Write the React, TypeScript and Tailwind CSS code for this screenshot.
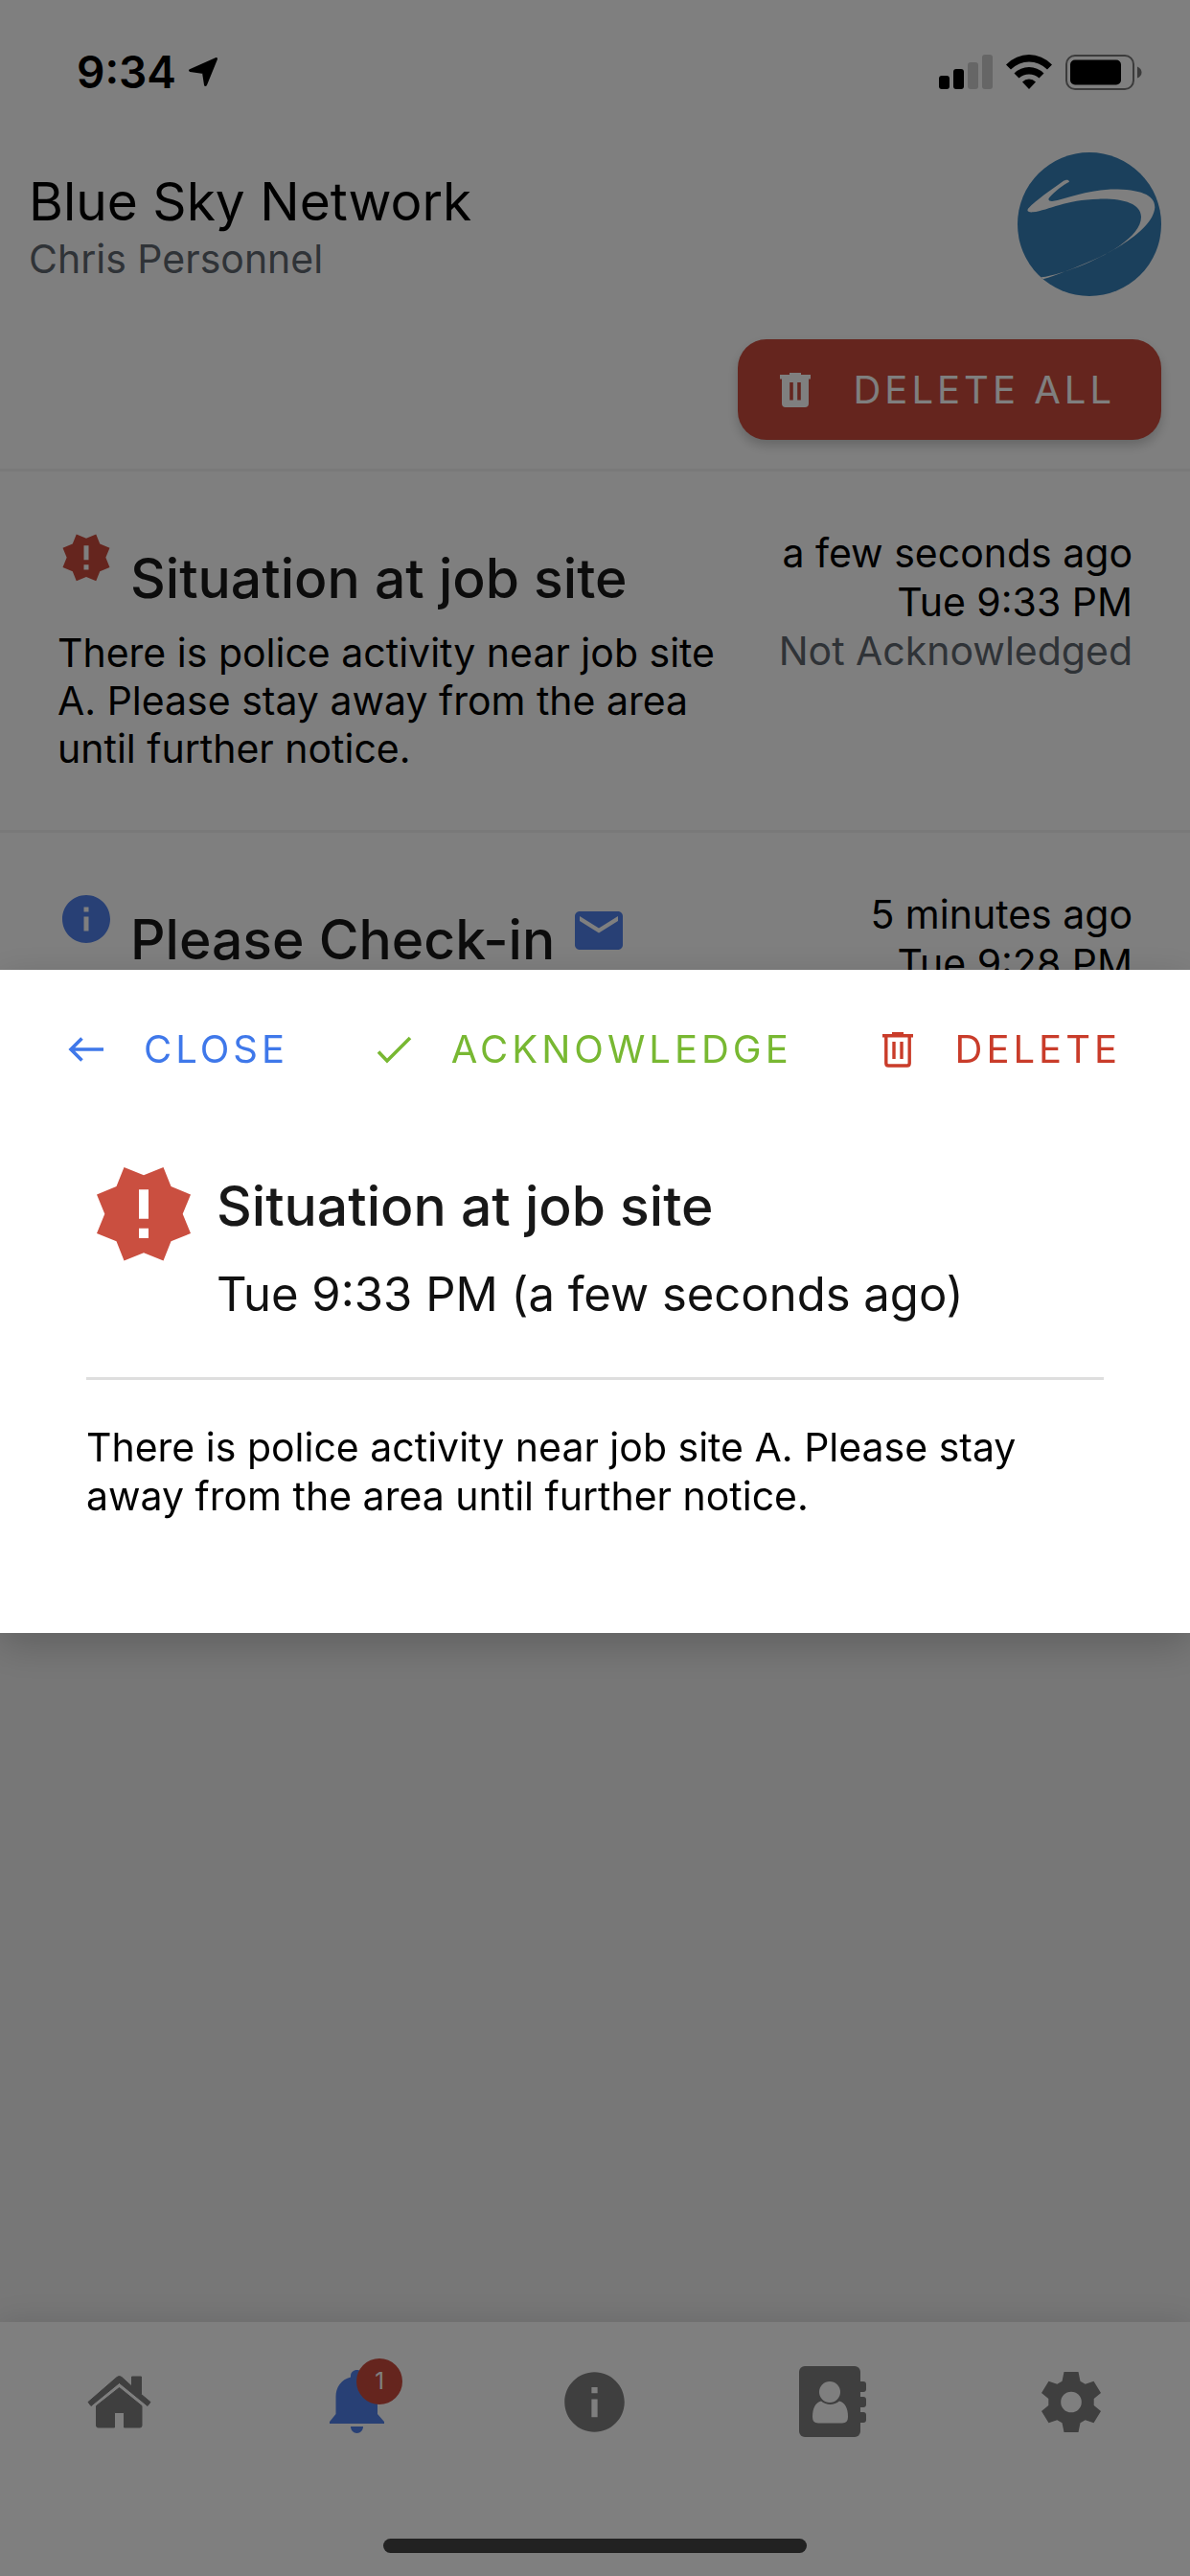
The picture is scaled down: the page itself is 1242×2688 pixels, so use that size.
import { useState } from 'react';
import type { ReactNode } from 'react';
import { MdEmail, MdInfo } from 'react-icons/md';

interface Alert {
  id: number;
  kind: 'emergency' | 'info';
  title: string;
  body?: string;
  ago: string;
  time: string;
  status?: string;
  mail?: boolean;
}

const ALERTS: Alert[] = [
  {
    id: 1,
    kind: 'emergency',
    title: 'Situation at job site',
    body: 'There is police activity near job site A. Please stay away from the area until further notice.',
    ago: 'a few seconds ago',
    time: 'Tue 9:33 PM',
    status: 'Not Acknowledged',
  },
  {
    id: 2,
    kind: 'info',
    title: 'Please Check-in',
    ago: '5 minutes ago',
    time: 'Tue 9:28 PM',
    mail: true,
  },
];

function EmergencyIcon({ className }: { className: string }) {
  return (
    <svg viewBox="-11 -11 120 120" className={className} fill="currentColor" aria-hidden="true">
      <path
        fillRule="evenodd"
        d="M28.5 0 49 8.3 69.5 0 77.5 20 98 28.5 89.7 48.7 98 69 77.5 77.3 69.5 97.5 49 89.2 28.5 97.5 20.5 77.3 0 69 8.3 48.7 0 28.5 20.5 20ZM44 23.3V53.7H54V23.3ZM44 63.7V74H54V63.7Z"
      />
    </svg>
  );
}

function TrashIcon() {
  return (
    <svg viewBox="0 0 48 48" className="size-12" fill="currentColor" aria-hidden="true">
      <path
        fillRule="evenodd"
        d="M18 6H30V8H40V12.5H38V38Q38 42 34 42H14Q10 42 10 38V12.5H8V8H18ZM18.2 16V34.5H21.8V16ZM26.2 16V34.5H29.8V16Z"
      />
    </svg>
  );
}

function TrashOutlineIcon() {
  return (
    <svg viewBox="0 0 48 48" className="size-12" fill="none" stroke="currentColor" strokeWidth="3.4" aria-hidden="true">
      <path d="M8 9.8H40M18 7.8H30M11.8 10V38.5Q11.8 41 14.3 41H33.7Q36.2 41 36.2 38.5V10M20 16V34M28 16V34" />
    </svg>
  );
}

function BackIcon() {
  return (
    <svg viewBox="0 0 48 48" className="size-12" fill="none" stroke="currentColor" strokeWidth="3.6" aria-hidden="true">
      <path d="M42 24H8.5M19.5 12.5 8 24 19.5 35.5" />
    </svg>
  );
}

function CheckIcon() {
  return (
    <svg viewBox="0 0 48 48" className="size-12" fill="none" stroke="currentColor" strokeWidth="3.6" aria-hidden="true">
      <path d="M8 26.5 17 36 41 12" />
    </svg>
  );
}

function Logo() {
  return (
    <svg viewBox="0 0 450 450" className="size-[150px]" role="img" aria-label="Blue Sky Network">
      <circle cx="225" cy="225" r="225" fill="#3680b8" />
      <path
        fill="#fff"
        d="M162 92C160 84 150 86 142 91C104 118 60 148 33 176C28 184 34 188 48 187C100 180 150 148 254 146C330 144 386 160 387 202C387 262 290 316 210 350C160 371 110 386 74 391L80 397C120 386 180 362 230 340C330 296 426 232 430 172C430 130 376 114 284 116C220 118 150 146 108 153C98 153 94 148 100 141C116 122 140 104 162 92Z"
      />
    </svg>
  );
}

function StatusBar() {
  return (
    <div className="flex h-[150px] items-center justify-between pr-[50px] pl-20 text-black">
      <div className="flex items-center gap-3">
        <span className="text-[46px] font-semibold">9:34</span>
        <svg viewBox="0 0 32 32" className="size-8" fill="currentColor" stroke="currentColor" strokeWidth="3" strokeLinejoin="round" aria-hidden="true">
          <path d="M29.5 2.5 2.5 14.5 16.5 16.5 18.5 29.5Z" />
        </svg>
      </div>
      <div className="flex items-center gap-[14px]">
        <svg viewBox="0 0 56 36" className="h-9 w-14" aria-hidden="true">
          <rect y="22" width="11" height="14" rx="3" />
          <rect x="15" y="15" width="11" height="21" rx="3" />
          <rect x="30" y="8" width="11" height="28" rx="3" fill="#ccc" />
          <rect x="45" width="11" height="36" rx="3" fill="#ccc" />
        </svg>
        <svg viewBox="0 0 48 36" className="h-9 w-12" aria-hidden="true">
          <path d="M0 10.5Q10.500 0 24 0T48 10.500L43 15.500Q34.500 7.500 24 7.500T5 15.500Z" />
          <path d="M8.500 19.500Q15 13 24 13T39.500 19.500L34.500 24.500Q30 20.500 24 20.500T13.500 24.500Z" />
          <path d="M17 28.500Q20 25.500 24 25.500T31 28.500L24 36Z" />
        </svg>
        <svg viewBox="0 0 80 37" className="h-[37px] w-20" aria-hidden="true">
          <rect x="1" y="1" width="70" height="35" rx="9" fill="none" stroke="#777" strokeWidth="2" />
          <rect x="5" y="5.500" width="53" height="26" rx="5" />
          <path d="M75 12.500Q79.500 14.500 79.500 18.500T75 24.500Z" fill="#777" />
        </svg>
      </div>
    </div>
  );
}

function AlertRow({ alert }: { alert: Alert }) {
  return (
    <li className="flex justify-between border-b-[3px] border-[#f2f2f2] bg-white p-[60px] text-[41px] text-black">
      <div className="w-5/8">
        <div className="flex items-start gap-4">
          {alert.kind === 'emergency' ? (
            <EmergencyIcon className="size-[60px] shrink-0 text-[#ca4b3d]" />
          ) : (
            <MdInfo className="size-[60px] shrink-0 text-[#5080ea]" />
          )}
          <h2 className="text-[57px] leading-[104px] font-medium text-[#181818]">{alert.title}</h2>
          {alert.mail && <MdEmail className="mt-3 size-[60px] shrink-0 text-[#5080ea]" />}
        </div>
        {alert.body && <p className="leading-[50px]">{alert.body}</p>}
      </div>
      <div className="shrink-0 text-right leading-[51px]">
        <p>{alert.ago}</p>
        <p>{alert.time}</p>
        {alert.status && <p className="text-[#5f666f]">{alert.status}</p>}
      </div>
    </li>
  );
}

function ModalButton({ icon, label, color, onClick }: { icon: ReactNode; label: string; color: string; onClick?: () => void }) {
  return (
    <button type="button" onClick={onClick} className={`flex h-[105px] items-center gap-9 text-[40px] tracking-widest uppercase ${color}`}>
      {icon}
      {label}
    </button>
  );
}

function TabBar() {
  return (
    <footer className="bg-white shadow-[0_0_30px_rgba(0,0,0,0.12)]">
      <nav className="grid h-[166px] grid-cols-5 text-[#7e7e7e]">
        <a href="#home" aria-label="Home" className="flex items-center justify-center">
          <svg viewBox="0 0 67 55" className="h-[55px] w-[67px]" fill="currentColor" stroke="currentColor" strokeWidth="1" strokeLinejoin="round">
            <path d="M1 27.500 31 1.500Q33.500-.5 36 1.500L46.500 11V1H56.500V19.500L66 27.500 63 31.500 33.500 7.500 4 31.500Z" />
            <path d="M33.500 12.500 57 31.500V52Q57 54 55 54H38.500V38.500H28.500V54H11.500Q9.500 54 9.500 52V31.500Z" />
          </svg>
        </a>
        <a href="#alerts" aria-label="Alerts" className="flex items-center justify-center text-[#5080ea]">
          <span className="relative">
            <svg viewBox="0 0 57 66" className="h-[66px] w-[57px]" fill="currentColor">
              <path d="M28.500 0C25 0 22 2.500 22 6V7.500C12 10 6.500 18 6.500 28V46L0 54V56H57V54L50 46V28C50 18 45 10 35 7.500V6C35 2.500 32 0 28.500 0Z" />
              <path d="M22 59H35C35 63 32 66 28.500 66S22 63 22 59Z" />
            </svg>
            <span className="absolute -top-3 left-7 flex size-12 items-center justify-center rounded-full bg-[#ca4b3d] text-2xl text-white">1</span>
          </span>
        </a>
        <a href="#info" aria-label="Info" className="flex items-center justify-center">
          <MdInfo className="size-[75px]" />
        </a>
        <a href="#contacts" aria-label="Contacts" className="flex items-center justify-center">
          <svg viewBox="0 0 70 74" className="h-[74px] w-[70px]" fill="currentColor">
            <rect width="64" height="74" rx="6" />
            <path d="M62 16H67Q70 16 70 19V24Q70 27 67 27H62ZM62 32H67Q70 32 70 35V40Q70 43 67 43H62ZM62 48H67Q70 48 70 51V56Q70 59 67 59H62Z" />
            <circle cx="32" cy="27" r="11" fill="#fff" />
            <path d="M23 36.500C28 41 37 41 42 36.500C48 38 51 44 51 53Q51 59.500 45 59.500H20Q14 59.500 14 53C14 44 17 38 23 36.500Z" fill="#fff" />
          </svg>
        </a>
        <a href="#settings" aria-label="Settings" className="flex items-center justify-center">
          <svg viewBox="0 0 62 63" className="h-[63px] w-[62px]" fill="currentColor">
            <path
              fillRule="evenodd"
              d="M23.500 0H38.500L40.500 9.700 45.700 12.700 54.500 9.700 62 22 54.700 28V35L62 41 54.500 53.300 45.700 50.300 40.500 53.300 38.500 63H23.500L21.500 53.300 16.300 50.300 7.500 53.300 0 41 7.300 35V28L0 22 7.500 9.700 16.300 12.700 21.500 9.700ZM31 20.700A10.800 10.800 0 1 0 31 42.300A10.800 10.800 0 1 0 31 20.700Z"
            />
          </svg>
        </a>
      </nav>
      <div className="flex justify-center pt-[60px] pb-6">
        <div className="h-[15px] w-[442px] max-w-full rounded-full bg-[#444]" />
      </div>
    </footer>
  );
}

export default function App() {
  const [selected, setSelected] = useState<Alert | null>(ALERTS[0]);

  return (
    <div className="flex min-h-screen flex-col bg-white font-['Inter',sans-serif]">
      <StatusBar />

      <header className="border-b-[3px] border-[#f2f2f2] px-[30px] pt-[9px] pb-[30px]">
        <div className="flex items-center justify-between">
          <div className="pt-2">
            <h1 className="text-[55px] leading-[64px] text-black">Blue Sky Network</h1>
            <p className="text-[41px] leading-[56px] text-[#5f666f]">Chris Personnel</p>
          </div>
          <Logo />
        </div>
        <div className="mt-[45px] flex justify-end">
          <button
            type="button"
            className="flex h-[105px] items-center gap-9 rounded-[30px] bg-[#ca4b3d] pr-12 pl-9 text-[40px] tracking-widest text-white uppercase shadow-[0_6px_12px_rgba(0,0,0,0.2)]"
          >
            <TrashIcon />
            Delete All
          </button>
        </div>
      </header>

      <main className="flex-1 bg-[#eee]">
        <ul>
          {ALERTS.map((a) => (
            <AlertRow key={a.id} alert={a} />
          ))}
        </ul>
      </main>

      <TabBar />

      {selected && (
        <div className="fixed inset-0 flex items-center bg-black/50 pt-7">
          <div role="dialog" aria-modal="true" aria-labelledby="alert-title" className="w-full bg-white shadow-[0_12px_40px_rgba(0,0,0,0.2)]">
            <div className="flex justify-between pt-[30px] pr-[72px] pl-[66px]">
              <ModalButton icon={<BackIcon />} label="Close" color="text-[#3f78ea]" onClick={() => setSelected(null)} />
              <ModalButton icon={<CheckIcon />} label="Acknowledge" color="text-[#78b832]" />
              <ModalButton icon={<TrashOutlineIcon />} label="Delete" color="text-[#c93c2a]" />
            </div>
            <div className="px-[90px] pt-[60px] pb-[117px]">
              <div className="flex items-start gap-4 border-b-[3px] border-[#dedede] pb-14">
                <EmergencyIcon className="size-[120px] shrink-0 text-[#ca4f40]" />
                <div className="pt-4">
                  <h2 id="alert-title" className="text-[57px] leading-[72px] font-medium text-[#181818]">
                    {selected.title}
                  </h2>
                  <p className="mt-[26px] text-[49px] leading-[60px] text-[#111]">
                    {selected.time} ({selected.ago})
                  </p>
                </div>
              </div>
              <p className="pt-[45px] text-[41px] leading-[51px] text-black">{selected.body}</p>
            </div>
          </div>
        </div>
      )}
    </div>
  );
}
